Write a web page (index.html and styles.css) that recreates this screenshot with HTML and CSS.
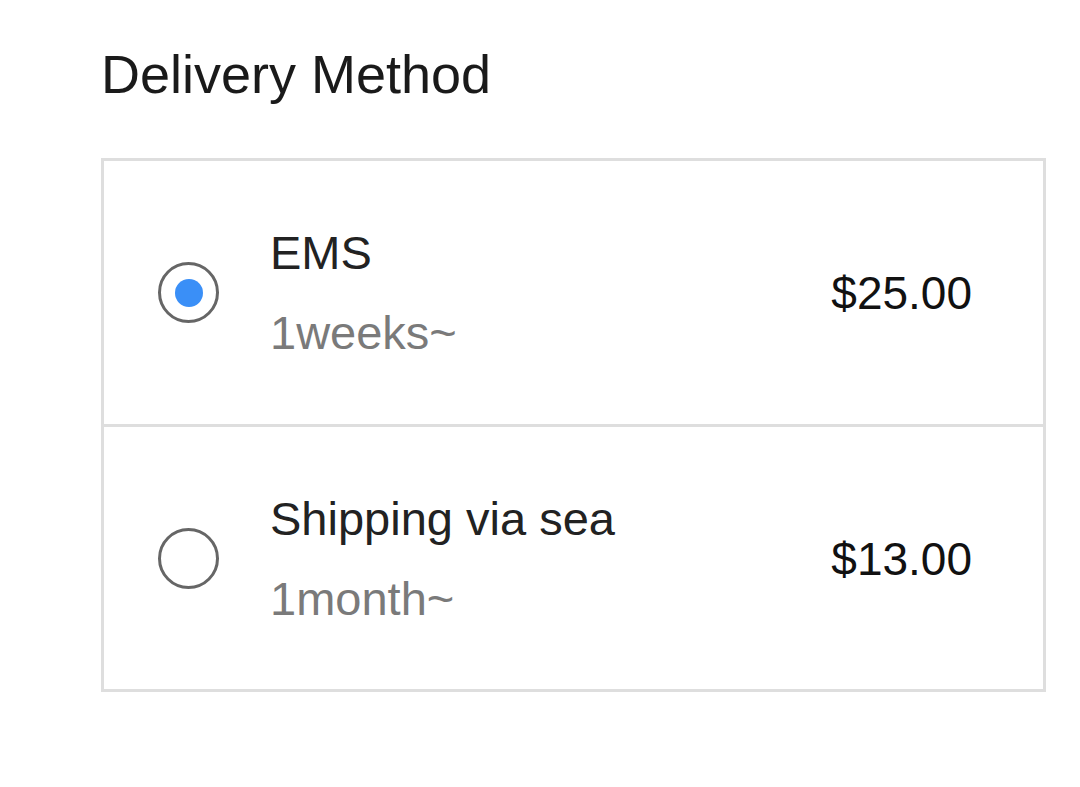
FILE: index.html
```html
<!DOCTYPE html>
<html>
<head>
<meta charset="utf-8">
<link rel="stylesheet" href="styles.css">
</head>
<body>
<main class="page">
  <h1 class="title">Delivery Method</h1>
  <div class="options">
    <label class="option">
      <span class="radio checked"><span class="dot"></span></span>
      <span class="info">
        <span class="name">EMS</span>
        <span class="time">1weeks~</span>
      </span>
      <span class="price">$25.00</span>
    </label>
    <label class="option">
      <span class="radio"></span>
      <span class="info">
        <span class="name">Shipping via sea</span>
        <span class="time">1month~</span>
      </span>
      <span class="price">$13.00</span>
    </label>
  </div>
</main>
</body>
</html>
```

FILE: styles.css
```css
html, body {
  margin: 0;
  padding: 0;
  background: #ffffff;
}

body {
  font-family: "Liberation Sans", Arial, Helvetica, sans-serif;
  color: #1c1c1c;
}

.page {
  padding: 43px 34px 0 101px;
}

.title {
  margin: 0 0 53px 0;
  font-size: 54px;
  line-height: 62px;
  font-weight: 400;
  color: #1a1a1a;
}

.options {
  width: 945px;
  box-sizing: border-box;
  border: 3px solid #dedede;
  display: flex;
  flex-direction: column;
}

.option {
  height: 263px;
  box-sizing: border-box;
  display: flex;
  align-items: center;
  padding: 0 71px 0 54px;
}

.option + .option {
  border-top: 3px solid #dedede;
  height: 265px;
  padding-top: 1px;
}

.radio {
  width: 61px;
  height: 61px;
  box-sizing: border-box;
  border: 3.5px solid #666666;
  border-radius: 50%;
  display: flex;
  align-items: center;
  justify-content: center;
  flex: none;
}

.dot {
  width: 28px;
  height: 28px;
  border-radius: 50%;
  background: #3a8ff7;
}

.info {
  display: flex;
  flex-direction: column;
  gap: 28px;
  margin-left: 51px;
  flex: 1;
}

.name {
  font-size: 47px;
  line-height: 52px;
  color: #222222;
}

.time {
  font-size: 47px;
  line-height: 52px;
  color: #7a7a7a;
}

.price {
  font-size: 46px;
  line-height: 52px;
  color: #111111;
}
```
